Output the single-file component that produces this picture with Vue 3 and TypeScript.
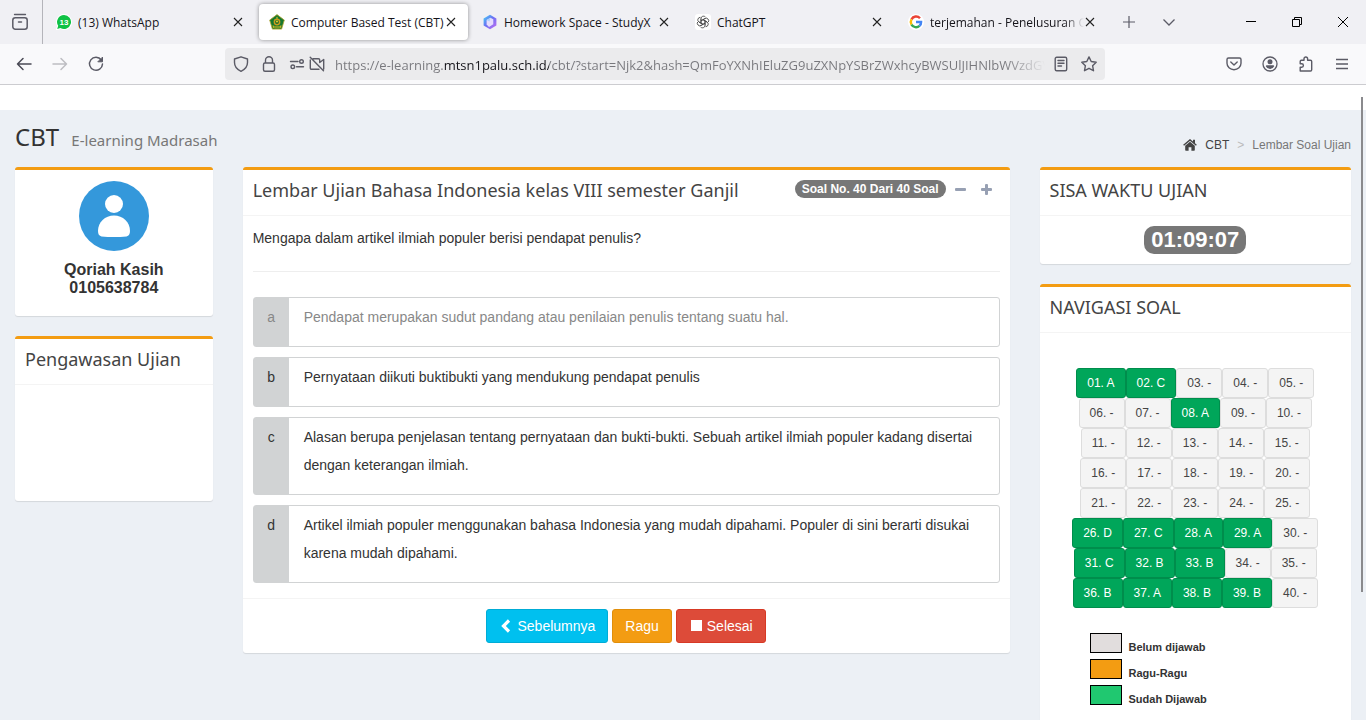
<script setup lang="ts">
import { ref } from 'vue'

interface Tab {
  id: string
  title: string
  active?: boolean
  faded?: boolean
}

interface Option {
  key: string
  text: string
  muted?: boolean
}

const tabs: Tab[] = [
  { id: 'whatsapp', title: '(13) WhatsApp' },
  { id: 'cbt', title: 'Computer Based Test (CBT)', active: true },
  { id: 'studyx', title: 'Homework Space - StudyX' },
  { id: 'chatgpt', title: 'ChatGPT' },
  { id: 'google', title: 'terjemahan - Penelusuran Go', faded: true },
]

const address = ref(
  'https://e-learning.mtsn1palu.sch.id/cbt/?start=Njk2&hash=QmFoYXNhIEluZG9uZXNpYSBrZWxhcyBWSUlJIHNlbWVzdGVy',
)

const options: Option[] = [
  { key: 'a', text: 'Pendapat merupakan sudut pandang atau penilaian penulis tentang suatu hal.', muted: true },
  { key: 'b', text: 'Pernyataan diikuti buktibukti yang mendukung pendapat penulis' },
  {
    key: 'c',
    text: 'Alasan berupa penjelasan tentang pernyataan dan bukti-bukti. Sebuah artikel ilmiah populer kadang disertai dengan keterangan ilmiah.',
  },
  {
    key: 'd',
    text: 'Artikel ilmiah populer menggunakan bahasa Indonesia yang mudah dipahami. Populer di sini berarti disukai karena mudah dipahami.',
  },
]
const choice = ref('')

const answers: Record<number, string> = {
  1: 'A', 2: 'C', 8: 'A', 26: 'D', 27: 'C', 28: 'A', 29: 'A',
  31: 'C', 32: 'B', 33: 'B', 36: 'B', 37: 'A', 38: 'B', 39: 'B',
}
const rows: number[][] = Array.from({ length: 8 }, (_, r) =>
  Array.from({ length: 5 }, (_, c) => r * 5 + c + 1),
)
const label = (n: number): string => `${String(n).padStart(2, '0')}. ${answers[n] ?? '-'}`

const legend = [
  { kind: 'empty', text: 'Belum dijawab' },
  { kind: 'doubt', text: 'Ragu-Ragu' },
  { kind: 'done', text: 'Sudah Dijawab' },
]
</script>

<template>
  <div class="window">
    <header class="tabstrip">
      <button class="recent" aria-label="Recent browsing">
        <svg width="18" height="18" viewBox="0 0 18 18" fill="none" stroke="#5b5b66" stroke-width="1.5" stroke-linecap="round">
          <path d="M3.5 1.5h11" stroke-width="1.3" />
          <rect x="1.8" y="4.700" width="14.4" height="11.500" rx="2.500" />
          <path d="M7.5 9h3" />
        </svg>
      </button>
      <nav class="tabs">
        <div v-for="tab in tabs" :key="tab.id" class="tab" :class="{ active: tab.active }">
          <svg v-if="tab.id === 'whatsapp'" class="fav" viewBox="0 0 16 16">
            <path d="M8 1a7 7 0 1 1-3.6 13L1.2 15l1-3.2A7 7 0 0 1 8 1z" fill="#fff" stroke="#fff" stroke-width="2" />
            <path d="M8 1a7 7 0 1 1-3.6 13L1.2 15l1-3.2A7 7 0 0 1 8 1z" fill="#0fc245" />
            <text x="8" y="11" text-anchor="middle" font-size="8" font-weight="700" fill="#fff" font-family="Liberation Sans, sans-serif">13</text>
          </svg>
          <svg v-else-if="tab.id === 'cbt'" class="fav" viewBox="0 0 16 16">
            <path d="M8 .6l7.3 5.5-2.7 9H3.4l-2.7-9z" fill="#15772f" stroke="#b3a32a" stroke-width=".8" />
            <path d="M8 2.6l1 2h-2z" fill="#e8d22b" />
            <circle cx="8" cy="8" r="3.4" fill="#c99a1c" />
            <circle cx="8" cy="8" r="1.9" fill="#176a2c" />
            <circle cx="8" cy="7.6" r="1" fill="#e8d22b" />
            <path d="M3.5 11.2q4.500 1.800 9 0l-.5 2.600q-4 1-8 0z" fill="#c9b321" />
            <path d="M5 13h6" stroke="#15772f" stroke-width=".8" />
          </svg>
          <svg v-else-if="tab.id === 'studyx'" class="fav" viewBox="0 0 16 16">
            <defs>
              <linearGradient id="hex" x1="0" y1="0" x2="1" y2="1">
                <stop offset="0" stop-color="#42d7f5" />
                <stop offset=".45" stop-color="#6a72f4" />
                <stop offset="1" stop-color="#c56cf0" />
              </linearGradient>
            </defs>
            <path d="M8 .8l6.400 3.600v7.200L8 15.200 1.600 11.600V4.400z" fill="url(#hex)" />
            <path d="M8.500 3.800l2.800 1.500v5L7 13 4.600 10.500V6z" fill="#e7dcfd" />
            <path d="M8.500 3.800L7.500 7.500 4.600 6z" fill="#a9d4fb" />
          </svg>
          <svg v-else-if="tab.id === 'chatgpt'" class="fav" viewBox="0 0 16 16">
            <rect width="16" height="16" rx="3" fill="#fff" />
            <g fill="none" stroke="#444" stroke-width=".8" stroke-linejoin="round">
              <path v-for="n in 6" :key="n" d="M6 9.200V4.600a2.500 2.500 0 0 1 4.700-1.200M6 6.800l4-2.300" :transform="`rotate(${n * 60} 8 8)`" />
            </g>
          </svg>
          <svg v-else class="fav" viewBox="0 0 16 16">
            <circle cx="8" cy="8" r="8" fill="#fff" />
            <g fill="none" stroke-width="2.400">
              <path d="M12 4.200A5.200 5.200 0 0 0 3.500 5.400" stroke="#ea4335" />
              <path d="M3.500 5.400a5.200 5.200 0 0 0 0 5.200" stroke="#fbbc05" />
              <path d="M3.500 10.600a5.200 5.200 0 0 0 8 1.300" stroke="#34a853" />
              <path d="M11.500 11.900A5 5 0 0 0 13.100 8H8" stroke="#4285f4" />
            </g>
          </svg>
          <a class="tab-title" :class="{ faded: tab.faded }" href="#">{{ tab.title }}</a>
          <button class="close" aria-label="Close tab">
            <svg width="10" height="10" viewBox="0 0 10 10" stroke="#222" stroke-width="1.1"><path d="M1 1l8 8M9 1L1 9" /></svg>
          </button>
        </div>
      </nav>
      <button class="strip-btn" aria-label="New tab">
        <svg width="12" height="12" viewBox="0 0 12 12" stroke="#5b5b66" stroke-width="1.2"><path d="M6 0v12M0 6h12" /></svg>
      </button>
      <button class="strip-btn" aria-label="List tabs">
        <svg width="12" height="12" viewBox="0 0 12 12" fill="none" stroke="#5b5b66" stroke-width="1.3"><path d="M.5 3.500L6 9l5.500-5.500" /></svg>
      </button>
      <div class="win-controls">
        <button aria-label="Minimize"><svg width="10" height="10" viewBox="0 0 10 10" stroke="#000"><path d="M0 4.500h10" /></svg></button>
        <button aria-label="Restore"><svg width="10" height="10" viewBox="0 0 10 10" fill="none" stroke="#000"><path d="M.5 2.500h7v7h-7zM2.500 2.500v-2h7v7h-2" /></svg></button>
        <button aria-label="Close window"><svg width="10" height="10" viewBox="0 0 10 10" stroke="#000"><path d="M0 0l10 10M10 0L0 10" /></svg></button>
      </div>
    </header>

    <div class="toolbar">
      <button class="tool" aria-label="Back">
        <svg width="16" height="16" viewBox="0 0 16 16" fill="none" stroke="#4a4a55" stroke-width="1.5" stroke-linecap="round" stroke-linejoin="round"><path d="M15 8H1.500M7 2.500L1.500 8 7 13.500" /></svg>
      </button>
      <button class="tool" aria-label="Forward">
        <svg width="16" height="16" viewBox="0 0 16 16" fill="none" stroke="#bdbdc2" stroke-width="1.5" stroke-linecap="round" stroke-linejoin="round"><path d="M1 8h13.500M9 2.500L14.500 8 9 13.500" /></svg>
      </button>
      <button class="tool" aria-label="Reload">
        <svg width="16" height="16" viewBox="0 0 16 16" fill="none" stroke="#5b5b66" stroke-width="1.5" stroke-linecap="round"><path d="M13.300 4A6.500 6.500 0 1 0 14.500 8" /><path d="M14.500 1.500v4.300h-4.300z" fill="#5b5b66" stroke-width="1" stroke-linejoin="round" /></svg>
      </button>
      <span class="spring"></span>
      <div class="urlbar">
        <button class="url-btn" aria-label="Tracking protection">
          <svg width="16" height="16" viewBox="0 0 16 16" fill="none" stroke="#5b5b66" stroke-width="1.400" stroke-linejoin="round"><path d="M8 .8l6.500 2.200v3.500c0 4-2.500 7-6.500 8.800-4-1.800-6.500-4.800-6.500-8.800V3z" /></svg>
        </button>
        <button class="url-btn" aria-label="Site security">
          <svg width="16" height="16" viewBox="0 0 16 16" fill="none" stroke="#5b5b66" stroke-width="1.400"><rect x="2.500" y="7" width="11" height="8.300" rx="1.500" /><path d="M4.500 7V4.300a3.500 3.500 0 0 1 7 0V7" /></svg>
        </button>
        <button class="url-btn narrow" aria-label="Permissions">
          <svg width="16" height="16" viewBox="0 0 16 16" fill="none" stroke="#5b5b66" stroke-width="1.400" stroke-linecap="round"><path d="M1.500 5.500h7.500M7.500 10.800h7" /><circle cx="12.500" cy="5.500" r="1.800" /><circle cx="3.800" cy="10.800" r="1.800" /></svg>
        </button>
        <button class="url-btn narrow" aria-label="Camera blocked">
          <svg width="16" height="16" viewBox="0 0 16 16" fill="none" stroke="#5b5b66" stroke-width="1.400" stroke-linejoin="round" stroke-linecap="round"><path d="M4 2.800h5.500q1.200 0 1.200 1.200v2.500l4-3v9.500M10 13.200H2.500q-1.200 0-1.200-1.200V4M1.200 1.200l13.300 13.600" /></svg>
        </button>
        <input v-model="address" class="address" type="text" aria-label="Address" spellcheck="false" />
        <button class="url-btn" aria-label="Reader view">
          <svg width="16" height="16" viewBox="0 0 16 16" fill="none" stroke="#5b5b66" stroke-width="1.400" stroke-linecap="round"><rect x="2.200" y="1.200" width="11.500" height="13.500" rx="1.500" /><path d="M5 4.500h6M5 7.300h6M5 10h3.500" /></svg>
        </button>
        <button class="url-btn" aria-label="Bookmark">
          <svg width="16" height="16" viewBox="0 0 16 16" fill="none" stroke="#5b5b66" stroke-width="1.400" stroke-linejoin="round"><path d="M8 .9l2.200 4.600 5 .7-3.600 3.500.9 5L8 12.300l-4.500 2.400.9-5L.8 6.200l5-.7z" /></svg>
        </button>
      </div>
      <span class="spring"></span>
      <button class="tool" aria-label="Save to Pocket">
        <svg width="16" height="16" viewBox="0 0 16 16" fill="none" stroke="#5b5b66" stroke-width="1.400" stroke-linecap="round" stroke-linejoin="round"><path d="M2.500 2h11q1.500 0 1.500 1.500v3.700a7 6.500 0 0 1-14 0V3.500Q1 2 2.500 2zM4.800 6L8 9l3.200-3" /></svg>
      </button>
      <button class="tool" aria-label="Account">
        <svg width="16" height="16" viewBox="0 0 16 16" fill="#5b5b66"><circle cx="8" cy="8" r="7" fill="none" stroke="#5b5b66" stroke-width="1.300" /><circle cx="8" cy="5.700" r="2.500" /><path d="M3.800 10.200q0-1 1-1h6.400q1 0 1 1-1.300 2.800-4.200 2.800t-4.200-2.800z" /></svg>
      </button>
      <button class="tool" aria-label="Extensions">
        <svg width="16" height="16" viewBox="0 0 16 16" fill="none" stroke="#5b5b66" stroke-width="1.400" stroke-linejoin="round"><path d="M6 4.300V2.800a1.800 1.800 0 0 1 3.600 0v1.500h2.900q1.200 0 1.200 1.200v8.300q0 1.200-1.200 1.200H2.200v-3.800h1.500a1.700 1.700 0 0 0 0-3.400H2.200V5.500q0-1.200 1.200-1.200z" /></svg>
      </button>
      <button class="tool" aria-label="Menu">
        <svg width="16" height="16" viewBox="0 0 16 16" stroke="#5b5b66" stroke-width="1.300"><path d="M2 3.500h12M2 8h12M2 12.500h12" /></svg>
      </button>
    </div>

    <div class="viewport">
      <div class="navbar"></div>
      <main class="content">
        <div class="page-head">
          <h1>CBT <small>E-learning Madrasah</small></h1>
          <nav class="crumbs">
            <a href="#">
              <svg width="14" height="12" viewBox="0 0 14 12" fill="#444"><path d="M7 2.800l4.800 4V11q0 .7-.7.700H8.400V8.300H5.600v3.400H2.900q-.7 0-.7-.7V6.800z" /><path d="M.6 6.200L7 .9l6.400 5.300" fill="none" stroke="#444" stroke-width="1.400" /><path d="M10 .8h2v4l-2-1.700z" /></svg>
              CBT
            </a>
            <span class="sep">&gt;</span>
            <span class="here">Lembar Soal Ujian</span>
          </nav>
        </div>

        <div class="row">
          <div class="col">
            <section class="box profile">
              <svg width="70" height="70" viewBox="0 0 70 70">
                <circle cx="35" cy="35" r="35" fill="#3498db" />
                <circle cx="35" cy="23" r="9" fill="#fff" />
                <path d="M19 50c0-9 7-15.500 16-15.500S51 41 51 50q0 4.500-3.500 5.500-12.500 1-25 0Q19 54.500 19 50z" fill="#fff" />
              </svg>
              <p class="name">Qoriah Kasih<br />0105638784</p>
            </section>
            <section class="box">
              <div class="box-head"><h2>Pengawasan Ujian</h2></div>
              <div class="watch"></div>
            </section>
          </div>

          <div class="col">
            <section class="box">
              <div class="box-head">
                <h2>Lembar Ujian Bahasa Indonesia kelas VIII semester Ganjil</h2>
                <div class="box-tools">
                  <span class="badge">Soal No. 40 Dari 40 Soal</span>
                  <button aria-label="Smaller text"><svg width="11" height="11" viewBox="0 0 11 11" fill="#97a0b3"><rect y="4" width="11" height="3" rx="1" /></svg></button>
                  <button aria-label="Larger text"><svg width="11" height="11" viewBox="0 0 11 11" fill="#97a0b3"><rect y="4" width="11" height="3" rx="1" /><rect x="4" width="3" height="11" rx="1" /></svg></button>
                </div>
              </div>
              <div class="question">
                <p>Mengapa dalam artikel ilmiah populer berisi pendapat penulis?</p>
                <hr />
                <div class="options">
                  <label v-for="o in options" :key="o.key" class="option" :class="{ muted: o.muted }">
                    <input v-model="choice" type="radio" name="answer" :value="o.key" />
                    <span class="letter">{{ o.key }}</span>
                    <span class="text">{{ o.text }}</span>
                  </label>
                </div>
              </div>
              <div class="actions">
                <button class="btn info">
                  <svg width="14" height="14" viewBox="0 0 14 14" fill="none" stroke="#fff" stroke-width="3.200"><path d="M10 1.500L4.500 7l5.500 5.500" /></svg>
                  Sebelumnya
                </button>
                <button class="btn warning">Ragu</button>
                <button class="btn danger">
                  <svg width="14" height="14" viewBox="0 0 14 14" fill="#fff"><rect x="2" y="1" width="11" height="11" /></svg>
                  Selesai
                </button>
              </div>
            </section>
          </div>

          <div class="col">
            <section class="box">
              <div class="box-head"><h2>SISA WAKTU UJIAN</h2></div>
              <div class="timer"><span>01:09:07</span></div>
            </section>
            <section class="box">
              <div class="box-head"><h2>NAVIGASI SOAL</h2></div>
              <div class="numbers">
                <div v-for="(row, i) in rows" :key="i" class="number-row">
                  <button v-for="n in row" :key="n" class="number" :class="{ answered: answers[n] }">{{ label(n) }}</button>
                </div>
              </div>
              <ul class="legend">
                <li v-for="l in legend" :key="l.kind">
                  <span class="swatch" :class="l.kind"></span>
                  <span class="legend-text">{{ l.text }}</span>
                </li>
              </ul>
            </section>
          </div>
        </div>
      </main>
      <div class="scroll-thumb"></div>
    </div>
  </div>
</template>

<style>
body {
  margin: 0;
  overflow: hidden;
}
</style>

<style scoped>
.window {
  display: flex;
  flex-direction: column;
  height: 100vh;
  overflow: hidden;
  font-family: 'Liberation Sans', Arial, sans-serif;
  font-size: 14px;
  line-height: 20px;
  color: #333;
}
.window *,
.window *::before {
  box-sizing: border-box;
}
button {
  display: inline-flex;
  align-items: center;
  justify-content: center;
  margin: 0;
  padding: 0;
  border: 0;
  background: none;
  font: inherit;
  color: inherit;
}
svg {
  flex: none;
}

/* tab strip */
.tabstrip {
  display: flex;
  flex: none;
  align-items: center;
  height: 44px;
  background: #f0f0f4;
  font-family: 'Open Sans', 'Noto Sans', sans-serif;
  font-size: 12px;
  color: #15141a;
}
.recent {
  width: 43px;
  height: 44px;
  padding-right: 3px;
  border-right: 1px solid #b4b4ba;
}
.tabs {
  display: flex;
  flex: 0 1 1066px;
  gap: 4px;
  padding: 0 2px 0 3px;
  min-width: 0;
}
.tab {
  display: flex;
  flex: 1 1 0;
  align-items: center;
  min-width: 0;
  height: 36px;
  padding: 0 11px 0 10px;
  border-radius: 4px;
}
.tab.active {
  background: #fff;
  box-shadow: 0 0 4px rgba(0, 0, 0, 0.4);
}
.fav {
  width: 16px;
  height: 16px;
  margin-right: 6px;
}
.tab-title {
  flex: 1;
  min-width: 0;
  overflow: hidden;
  line-height: 22px;
  padding-top: 2px;
  white-space: nowrap;
  color: inherit;
  text-decoration: none;
}
.tab-title.faded {
  mask-image: linear-gradient(to left, transparent, #000 20px);
}
.close {
  width: 12px;
  height: 20px;
}
.strip-btn {
  width: 40px;
  height: 36px;
}
.win-controls {
  display: flex;
  margin-left: auto;
}
.win-controls button {
  width: 46px;
  height: 44px;
}

/* toolbar */
.toolbar {
  display: flex;
  flex: none;
  align-items: center;
  height: 41px;
  padding: 0 6px;
  background: #f9f9fb;
  border-bottom: 1px solid #ccccd0;
}
.tool {
  width: 36px;
  height: 32px;
}
.spring {
  flex: 1;
}
.urlbar {
  display: flex;
  flex: 0 1 880px;
  align-items: center;
  min-width: 0;
  height: 32px;
  padding: 0 2px;
  border-radius: 4px;
  background: #ebebed;
}
.url-btn {
  flex: none;
  width: 28px;
  height: 28px;
}
.url-btn.narrow {
  width: 20px;
}
.url-btn.narrow:nth-child(3) {
  margin-left: 4px;
}
.address {
  flex: 1;
  min-width: 0;
  height: 28px;
  margin: 0 2px 0 8px;
  padding: 2px 0 0;
  border: 0;
  outline: 0;
  font-family: 'Open Sans', 'Noto Sans', sans-serif;
  font-size: 13px;
  color: transparent;
  background: linear-gradient(to right, #77777c 109px, #15141a 109px, #15141a 214px, #77777c 214px);
  background-clip: text;
  mask-image: linear-gradient(to left, transparent, #000 40px);
}

/* page */
.viewport {
  position: relative;
  flex: 1;
  min-height: 0;
  overflow: hidden;
  background: #ecf0f5;
}
.navbar {
  height: 25px;
  background: #fff;
}
.scroll-thumb {
  position: absolute;
  top: 12px;
  right: 3px;
  width: 2px;
  height: 78%;
  background: #8a8a8d;
}
h1,
h2,
p {
  margin: 0;
  font-weight: 400;
}
h1,
h2 {
  font-family: 'Noto Sans', 'Open Sans', sans-serif;
}
.page-head {
  display: flex;
  justify-content: space-between;
  align-items: flex-start;
  padding: 15px 15px 0;
  height: 57px;
}
h1 {
  font-size: 24px;
  line-height: 24px;
}
h1 small {
  padding-left: 6px;
  font-size: 15px;
  color: #777;
}
.crumbs {
  display: flex;
  gap: 8px;
  padding-top: 10px;
  font-size: 12px;
  line-height: 20px;
}
.crumbs a {
  display: flex;
  gap: 8px;
  align-items: center;
  color: #444;
  text-decoration: none;
}
.sep {
  color: #bbb;
}
.here {
  color: #777;
}
.row {
  display: grid;
  grid-template-columns: 2fr 7fr 3fr;
  align-items: start;
}
.col {
  min-width: 0;
  padding: 0 15px;
}
.box {
  margin-bottom: 20px;
  background: #fff;
  border-top: 3px solid #f39c12;
  border-radius: 3px;
  box-shadow: 0 1px 1px rgba(0, 0, 0, 0.1);
}
.box-head {
  display: flex;
  justify-content: space-between;
  align-items: flex-start;
  height: 46px;
  padding: 10px;
  border-bottom: 1px solid #f4f4f4;
}
h2 {
  font-size: 18px;
  line-height: 20px;
  white-space: nowrap;
  color: #444;
}
.profile {
  display: flex;
  flex-direction: column;
  align-items: center;
  padding: 11px 10px 19px;
}
.name {
  margin-top: 10px;
  font-size: 16px;
  font-weight: 700;
  line-height: 18px;
  text-align: center;
}
.watch {
  height: 116px;
}
.box-tools {
  display: flex;
  align-items: center;
}
.box-tools button {
  width: 26px;
  height: 18px;
}
.badge {
  margin-right: 2px;
  padding: 0 7px;
  border-radius: 9px;
  background: #777;
  color: #fff;
  font-size: 12px;
  font-weight: 700;
  line-height: 18px;
  white-space: nowrap;
}
.question {
  padding: 12px 10px 15px;
}
.question hr {
  height: 1px;
  margin: 23px 0 25px;
  border: 0;
  background: #eee;
}
.options {
  display: flex;
  flex-direction: column;
  gap: 10px;
}
.option {
  position: relative;
  display: flex;
  border: 1px solid #d1d3d4;
  border-radius: 3px;
  line-height: 28px;
}
.option input {
  position: absolute;
  margin: 0;
  opacity: 0;
}
.letter {
  flex: none;
  width: 35px;
  padding-top: 5px;
  background: #d1d3d4;
  text-align: center;
}
.text {
  padding: 5px 10px 15px 15px;
}
.muted {
  color: #888;
}
.actions {
  display: flex;
  justify-content: center;
  gap: 4px;
  padding: 10px;
  border-top: 1px solid #f4f4f4;
}
.btn {
  gap: 4px;
  height: 34px;
  padding: 0 12px;
  border: 1px solid;
  border-radius: 3px;
  color: #fff;
}
.info {
  background: #00c0ef;
  border-color: #00acd6;
}
.warning {
  background: #f39c12;
  border-color: #e08e0b;
}
.danger {
  background: #dd4b39;
  border-color: #d73925;
}
.timer {
  display: flex;
  justify-content: center;
  padding: 10px;
}
.timer span {
  padding: 0 7px;
  border-radius: 10px;
  background: #777;
  color: #fff;
  font-size: 22px;
  font-weight: 700;
  line-height: 28px;
}
.numbers {
  padding-top: 35px;
}
.number-row {
  display: flex;
  justify-content: center;
}
.number {
  height: 30px;
  padding: 0 10px;
  border: 1px solid #ddd;
  border-radius: 3px;
  background: #f4f4f4;
  color: #444;
  font-size: 12px;
}
.number.answered {
  background: #00a65a;
  border-color: #008d4c;
  color: #fff;
}
.legend {
  display: flex;
  flex-direction: column;
  gap: 6px;
  margin: 0;
  padding: 25px 10px 30px 50px;
  list-style: none;
  font-size: 11px;
  font-weight: 700;
}
.legend li {
  display: flex;
  align-items: flex-start;
  gap: 7px;
  height: 20px;
}
.legend-text {
  line-height: 28px;
}
.swatch {
  width: 32px;
  height: 20px;
  border: 1px solid #000;
}
.empty {
  background: #e1dddd;
}
.doubt {
  background: #f39c12;
}
.done {
  background: #20c870;
}
</style>
